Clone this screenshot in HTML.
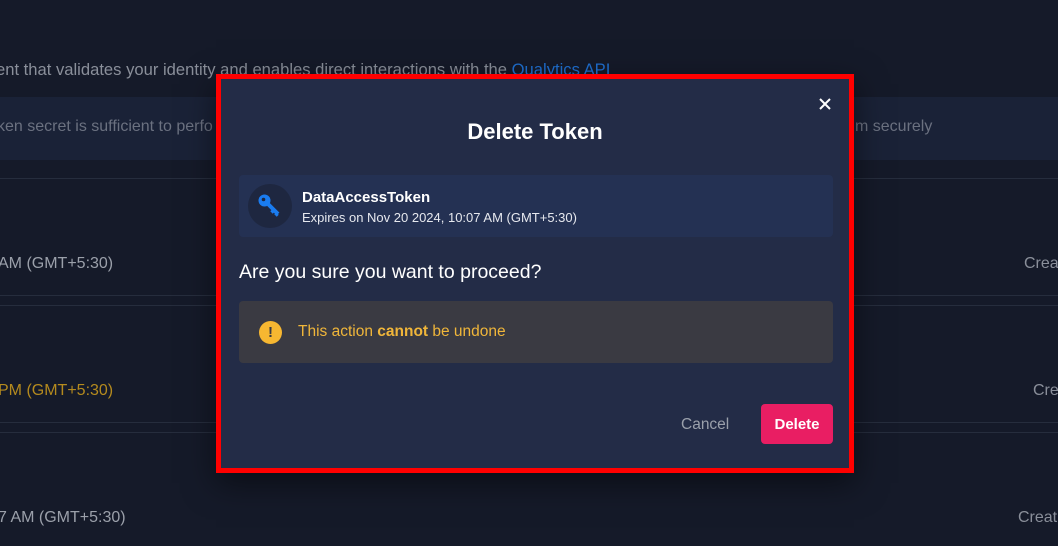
<!DOCTYPE html>
<html><head><style>
body{margin:0;width:1058px;height:546px;background:#151a29;font-family:"Liberation Sans",sans-serif;position:relative;overflow:hidden}
.t{position:absolute;white-space:nowrap}
.line{position:absolute;left:0;width:1058px;height:1px;background:#262d3d}
</style></head><body>
<div class="t" style="left:-4px;top:60px;font-size:16.6px;color:#8a8f9a">ent that validates your identity and enables direct interactions with the <span style="color:#1f6fd1">Qualytics API</span></div>
<div style="position:absolute;left:0;top:97px;width:1058px;height:63px;background:#1a2237"></div>
<div class="t" style="left:-3px;top:118px;font-size:16px;color:#6b7180">ken secret is sufficient to perfo</div>
<div class="t" style="left:855px;top:118px;font-size:16px;color:#6b7180">m securely</div>
<div class="line" style="top:178px"></div>
<div class="line" style="top:295px"></div>
<div class="line" style="top:305px"></div>
<div class="line" style="top:422px"></div>
<div class="line" style="top:432px"></div>
<div class="t" style="left:-2px;top:255px;font-size:16px;color:#9ba0aa">AM (GMT+5:30)</div>
<div class="t" style="left:-2px;top:382px;font-size:16px;color:#b48a1e">PM (GMT+5:30)</div>
<div class="t" style="left:-2px;top:509px;font-size:16px;color:#9ba0aa">7 AM (GMT+5:30)</div>
<div class="t" style="left:1024px;top:255px;font-size:16px;color:#8a8f9a">Crea</div>
<div class="t" style="left:1033px;top:382px;font-size:16px;color:#8a8f9a">Cre</div>
<div class="t" style="left:1018px;top:509px;font-size:16px;color:#8a8f9a">Creat</div>

<div style="position:absolute;left:216px;top:74px;width:628px;height:389px;border:5px solid #ff0000;background:#232c47;box-shadow:0 10px 30px rgba(0,0,0,.5)"></div>
<svg style="position:absolute;left:819px;top:98px" width="12" height="12"><path d="M1 1L11 11M11 1L1 11" stroke="#fff" stroke-width="2"/></svg>
<div class="t" style="left:216px;width:638px;text-align:center;top:119px;font-size:22px;font-weight:bold;color:#fff">Delete Token</div>
<div style="position:absolute;left:239px;top:175px;width:594px;height:62px;background:#243153;border-radius:4px"></div>
<div style="position:absolute;left:248px;top:184px;width:44px;height:44px;border-radius:50%;background:#1e2740"></div>
<svg style="position:absolute;left:257px;top:193px" width="26" height="26" viewBox="0 0 26 26"><circle cx="7.5" cy="7.5" r="6" fill="#1a7cf0"/><circle cx="6.5" cy="6.5" r="1.8" fill="#1e2740"/><path d="M10 10L21 21" stroke="#1a7cf0" stroke-width="4"/><path d="M17 17L14.5 19.5M20.5 20.5L18.5 22.5" stroke="#1a7cf0" stroke-width="3.5"/></svg>
<div class="t" style="left:302px;top:189px;font-size:15px;font-weight:bold;color:#fff">DataAccessToken</div>
<div class="t" style="left:302px;top:210px;font-size:13px;color:#e6e8ee">Expires on Nov 20 2024, 10:07 AM (GMT+5:30)</div>
<div class="t" style="left:239px;top:261px;font-size:19.5px;color:#fff">Are you sure you want to proceed?</div>
<div style="position:absolute;left:239px;top:301px;width:594px;height:62px;background:#3a3a42;border-radius:4px"></div>
<div style="position:absolute;left:259px;top:321px;width:23px;height:23px;border-radius:50%;background:#f7b731;color:#3a3a42;font-weight:bold;font-size:15px;text-align:center;line-height:23px">!</div>
<div class="t" style="left:298px;top:323px;font-size:15.5px;color:#f0b63a">This action <b>cannot</b> be undone</div>
<div class="t" style="left:681px;top:416px;font-size:15.5px;color:#9aa0ab">Cancel</div>
<div style="position:absolute;left:761px;top:404px;width:72px;height:40px;background:#e91e63;border-radius:4px;color:#fff;font-weight:bold;font-size:15px;text-align:center;line-height:41px">Delete</div>
</body></html>
